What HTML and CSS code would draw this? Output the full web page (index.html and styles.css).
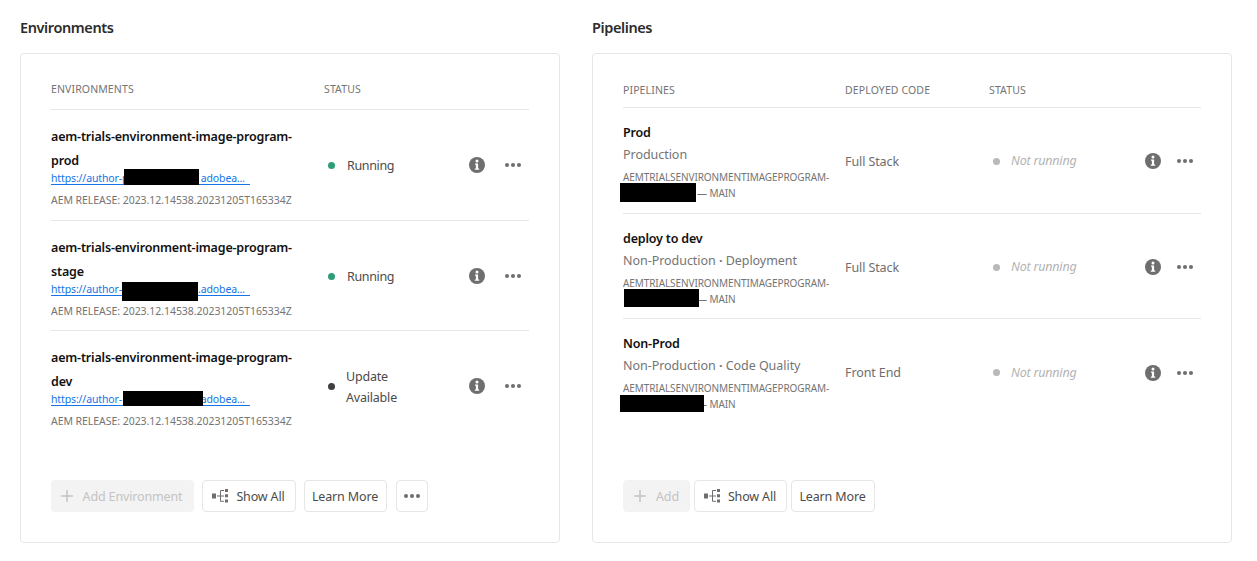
FILE: index.html
```html
<!DOCTYPE html>
<html lang="en">
<head>
<meta charset="utf-8">
<title>Environments and Pipelines</title>
<link rel="stylesheet" href="styles.css">
</head>
<body>
<svg class="defs" width="0" height="0">
  <symbol id="info" viewBox="0 0 16 16"><circle cx="8" cy="8" r="8" fill="#6e6e6e"/><circle cx="8" cy="3.9" r="1.5" fill="#fff"/><path d="M6 6.5h3.1v5h1.1v1.2H5.8v-1.2h1.1V7.7H6z" fill="#fff"/></symbol>
  <symbol id="more" viewBox="0 0 18 6"><circle cx="3" cy="3" r="2.05"/><circle cx="9" cy="3" r="2.05"/><circle cx="15" cy="3" r="2.05"/></symbol>
  <symbol id="plus" viewBox="0 0 12 12"><path d="M6 .5v11M.5 6h11" stroke="#c3c3c3" stroke-width="1.5" stroke-linecap="round"/></symbol>
  <symbol id="tree" viewBox="0 0 16 14"><path d="M0 4.5h4v5H0zM13 0h3v3h-3zM13 5.3h3v3h-3zM13 10.6h3v3h-3z"/><path d="M5 7h7M12 1.5H8.5v10.8H12" fill="none" stroke="#6e6e6e"/></symbol>
</svg>
<main class="page">
  <section class="panel panel-env">
    <h2 class="title">Environments</h2>
    <div class="card">
      <div class="row head"><span>Environments</span><span>Status</span></div>
      <div class="row">
        <div class="summary"><h3 class="name">aem-trials-environment-image-program-prod</h3>
          <div class="link"><span>https://author-p</span><i class="mask mask-e1"></i><span>adobea...</span></div>
          <p class="release">AEM RELEASE: 2023.12.14538.20231205T165334Z</p></div>
        <div class="status"><i class="dot green"></i><span>Running</span></div>
        <svg class="info"><use href="#info"/></svg><svg class="more"><use href="#more"/></svg>
      </div>
      <div class="row">
        <div class="summary"><h3 class="name">aem-trials-environment-image-program-stage</h3>
          <div class="link"><span>https://author-</span><i class="mask mask-e2"></i><span>.adobea...</span></div>
          <p class="release">AEM RELEASE: 2023.12.14538.20231205T165334Z</p></div>
        <div class="status"><i class="dot green"></i><span>Running</span></div>
        <svg class="info"><use href="#info"/></svg><svg class="more"><use href="#more"/></svg>
      </div>
      <div class="row">
        <div class="summary"><h3 class="name">aem-trials-environment-image-program-dev</h3>
          <div class="link"><span>https://author-</span><i class="mask mask-e3"></i><span>adobea...</span></div>
          <p class="release">AEM RELEASE: 2023.12.14538.20231205T165334Z</p></div>
        <div class="status update"><i class="dot dark"></i><span>Update<br>Available</span></div>
        <svg class="info"><use href="#info"/></svg><svg class="more"><use href="#more"/></svg>
      </div>
      <div class="actions">
        <button class="btn disabled add-env"><svg class="plus"><use href="#plus"/></svg><span>Add Environment</span></button>
        <button class="btn show"><svg class="tree"><use href="#tree"/></svg><span>Show All</span></button>
        <button class="btn learn"><span>Learn More</span></button>
        <button class="btn overflow"><svg class="more"><use href="#more"/></svg></button>
      </div>
    </div>
  </section>
  <section class="panel panel-pipe">
    <h2 class="title">Pipelines</h2>
    <div class="card">
      <div class="row head"><span>Pipelines</span><span>Deployed Code</span><span>Status</span></div>
      <div class="row">
        <div class="summary"><h3 class="name">Prod</h3><p class="kind">Production</p>
          <p class="repo">AEMTRIALSENVIRONMENTIMAGEPROGRAM-<span class="branch"><i class="mask mask-p1"></i>— MAIN</span></p></div>
        <span class="code">Full Stack</span>
        <div class="status idle"><i class="dot"></i><span>Not running</span></div>
        <svg class="info"><use href="#info"/></svg><svg class="more"><use href="#more"/></svg>
      </div>
      <div class="row">
        <div class="summary"><h3 class="name">deploy to dev</h3><p class="kind">Non-Production <b>·</b> Deployment</p>
          <p class="repo">AEMTRIALSENVIRONMENTIMAGEPROGRAM-<span class="branch"><i class="mask mask-p2"></i>— MAIN</span></p></div>
        <span class="code">Full Stack</span>
        <div class="status idle"><i class="dot"></i><span>Not running</span></div>
        <svg class="info"><use href="#info"/></svg><svg class="more"><use href="#more"/></svg>
      </div>
      <div class="row">
        <div class="summary"><h3 class="name">Non-Prod</h3><p class="kind">Non-Production <b>·</b> Code Quality</p>
          <p class="repo">AEMTRIALSENVIRONMENTIMAGEPROGRAM-<span class="branch"><i class="mask mask-p3"></i>— MAIN</span></p></div>
        <span class="code">Front End</span>
        <div class="status idle"><i class="dot"></i><span>Not running</span></div>
        <svg class="info"><use href="#info"/></svg><svg class="more"><use href="#more"/></svg>
      </div>
      <div class="actions">
        <button class="btn disabled add"><svg class="plus"><use href="#plus"/></svg><span>Add</span></button>
        <button class="btn show"><svg class="tree"><use href="#tree"/></svg><span>Show All</span></button>
        <button class="btn learn"><span>Learn More</span></button>
      </div>
    </div>
  </section>
</main>
</body>
</html>
```
FILE: styles.css
```css
* { box-sizing: border-box; margin: 0; padding: 0; }
body { background: #fff; color: #4b4b4b; font: 12.5px/20px "Noto Sans", "Open Sans", sans-serif; letter-spacing: -0.1px; }
svg { display: block; flex: none; fill: #6e6e6e; }
.defs { position: absolute; }
.page { display: flex; gap: 32px; padding: 16px 0 0 20px; }
.panel-env { width: 540px; }
.panel-pipe { width: 640px; }
.title { height: 37px; font-size: 14.5px; line-height: 22px; font-weight: 600; letter-spacing: -0.4px; color: #2c2c2c; }
.card { display: flex; flex-direction: column; height: 490px; padding: 25px 30px 30px; border: 1px solid #e6e6e6; border-radius: 4px; }
.row { display: grid; align-items: center; border-bottom: 1px solid #e6e6e6; }
.row:nth-of-type(4) { border-bottom-color: transparent; }
.panel-env .row { grid-template-columns: 273px 145px 35px 24px; height: 110.7px; }
.panel-pipe .row { grid-template-columns: 222px 144px 156px 31px 24px; height: 105.7px; padding-top: 2px; }
.row.head { align-items: start; font-size: 10.5px; letter-spacing: 0.12px; text-transform: uppercase; color: #747474; }
.panel-env .row.head { height: 31px; }
.panel-pipe .row.head { height: 29px; padding-top: 1px; }
.panel-env .summary { padding-top: 4px; }
.name { font-size: 12.5px; line-height: 24px; font-weight: 600; letter-spacing: -0.18px; color: #111; }
.panel-env .name { width: 246px; }
.link { position: relative; display: flex; justify-content: space-between; width: 199px; height: 14px; margin-top: -2px; padding-right: 5px; font-size: 10.5px; line-height: 14px; letter-spacing: -0.13px; color: #1473e6; border-bottom: 1px solid #1473e6; }
.release { margin-top: 7px; font-size: 10.5px; line-height: 17px; letter-spacing: -0.05px; color: #747474; white-space: nowrap; }
.mask { position: absolute; background: #000; }
.mask-e1 { left: 73px; top: -2px; width: 75px; height: 16px; }
.mask-e2 { left: 71px; top: 0; width: 76px; height: 19px; }
.mask-e3 { left: 72px; top: -1px; width: 80px; height: 15px; }
.mask-p1 { left: -3px; top: -2px; width: 76px; height: 19px; }
.mask-p2 { left: 1px; top: -2px; width: 75px; height: 18px; }
.mask-p3 { left: -3px; top: -1px; width: 84px; height: 17px; }
.status { display: flex; align-items: center; gap: 12px; padding: 2px 0 0 4px; letter-spacing: -0.35px; }
.status.update { gap: 11px; padding-top: 1px; line-height: 21px; letter-spacing: -0.2px; }
.dot { width: 7px; height: 7px; border-radius: 50%; background: #b9b9b9; }
.dot.green { background: #2d9d78; }
.dot.dark { background: #3f3f3f; }
.status.idle { gap: 11px; padding-top: 0; font-style: italic; letter-spacing: -0.2px; color: #b3b3b3; }
.info { width: 16px; height: 16px; }
.more { width: 18px; height: 6px; }
.panel-pipe .name { line-height: 22px; }
.kind { line-height: 22px; color: #747474; letter-spacing: -0.04px; }
.kind b { font-weight: 700; }
.repo { margin-top: 3px; font-size: 10px; line-height: 16px; letter-spacing: -0.09px; color: #747474; }
.branch { position: relative; display: block; padding-left: 74px; }
.code { padding-top: 1px; color: #6e6e6e; }
.actions { display: flex; height: 32px; margin-top: auto; }
.btn { display: flex; align-items: center; justify-content: center; height: 32px; border: 1px solid #e6e6e6; border-radius: 4px; background: #fff; color: #4b4b4b; font: inherit; letter-spacing: -0.15px; }
.btn span { padding-top: 1px; }
.btn.disabled { border-color: #f3f3f3; background: #f3f3f3; color: #c3c3c3; }
.plus { width: 12px; height: 12px; margin-right: 10px; }
.tree { width: 16px; height: 14px; margin-right: 8px; }
.add-env { width: 143px; margin-right: 8px; padding-right: 2px; }
.add { width: 67px; margin-right: 4px; }
.show { width: 94px; margin-right: 8px; padding-right: 1px; }
.panel-pipe .show { width: 93px; margin-right: 4px; }
.learn { width: 83px; margin-right: 9px; padding-right: 1px; }
.panel-pipe .learn { width: 84px; }
.overflow { width: 32px; }
```
